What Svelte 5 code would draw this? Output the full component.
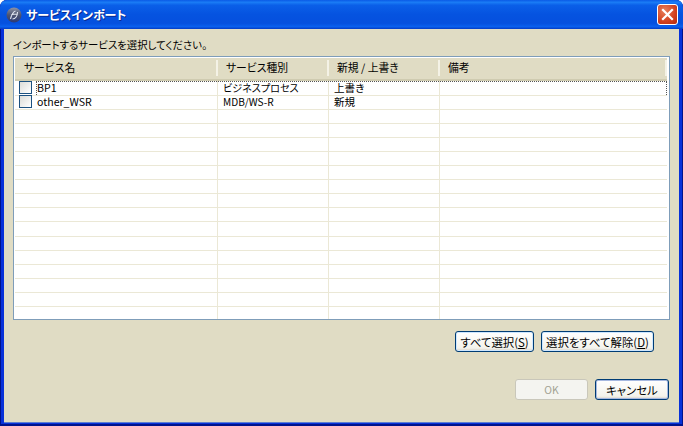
<script lang="ts">
	interface Row {
		name: string;
		kind: string;
		mode: string;
		note: string;
	}

	const services: Row[] = [
		{ name: 'BP1', kind: 'ビジネスプロセス', mode: '上書き', note: '' },
		{ name: 'other_WSR', kind: 'MDB/WS-R', mode: '新規', note: '' }
	];
	const emptyRows = Array.from({ length: 15 });
</script>

<div class="window">
	<header class="titlebar">
		<svg class="app-icon" width="16" height="16" viewBox="0 0 16 16">
			<defs>
				<linearGradient id="orb" x1="0" y1="0" x2="0" y2="1">
					<stop offset="0" stop-color="#8d93a6" />
					<stop offset="0.5" stop-color="#4d5470" />
					<stop offset="1" stop-color="#2b3a78" />
				</linearGradient>
			</defs>
			<circle cx="8" cy="8" r="7.5" fill="url(#orb)" />
			<path d="M4.5 12c1-4 2-7 5-8M6.5 12c3 0 5-3 5-7M5 8c2-1 4-1 6-1" fill="none" stroke="#dfe3ee" stroke-width="1.1" />
		</svg>
		<span class="title">サービスインポート</span>
		<button class="close" aria-label="閉じる">
			<svg width="13" height="13" viewBox="0 0 13 13">
				<path d="M2 2l9 9M11 2l-9 9" stroke="#fff" stroke-width="2.2" stroke-linecap="square" />
			</svg>
		</button>
	</header>

	<main class="content">
		<p class="prompt">インポートするサービスを選択してください。</p>

		<div class="table">
			<div class="thead">
				<div class="th c1">サービス名</div>
				<div class="th c2">サービス種別</div>
				<div class="th c3">新規 / 上書き</div>
				<div class="th c4">備考</div>
			</div>
			{#each services as row, i}
				<div class="row" class:focused={i === 0}>
					<div class="td c1">
						<span class="check"></span>
						<span class="name">{row.name}</span>
					</div>
					<div class="td c2">{row.kind}</div>
					<div class="td c3">{row.mode}</div>
					<div class="td c4">{row.note}</div>
				</div>
			{/each}
			{#each emptyRows as _}
				<div class="row">
					<div class="td c1"></div>
					<div class="td c2"></div>
					<div class="td c3"></div>
					<div class="td c4"></div>
				</div>
			{/each}
		</div>

		<div class="actions">
			<button class="btn">すべて選択(<u>S</u>)</button>
			<button class="btn wide">選択をすべて解除(<u>D</u>)</button>
		</div>

		<div class="footer">
			<button class="btn ok" disabled>OK</button>
			<button class="btn cancel">キャンセル</button>
		</div>
	</main>
</div>

<style>
	:global(body) {
		margin: 0;
		background: #fff;
	}

	.window {
		width: 683px;
		height: 426px;
		box-sizing: border-box;
		display: flex;
		flex-direction: column;
		border-radius: 7px 7px 0 0;
		overflow: hidden;
		background: #0831d9;
		box-shadow: inset 1px 0 0 #00138c, inset -1px 0 0 #00138c, inset 0 -2px 0 #00138c;
		font-family: "Noto Sans CJK JP", "Liberation Sans", sans-serif;
		font-size: 10.4px;
		font-feature-settings: "palt";
		color: #000;
	}

	.titlebar {
		height: 29px;
		flex: none;
		display: flex;
		align-items: center;
		padding: 0 5px 0 6px;
		gap: 4px;
		background: linear-gradient(180deg, #0a5ae6 0%, #1a7cf5 8%, #0a5fe8 18%, #0553e0 50%, #0550de 80%, #0a60ee 92%, #033bc4 100%);
	}

	.title {
		flex: 1;
		color: #fff;
		font-size: 12px;
		font-weight: 700;
		text-shadow: 1px 1px 0 #0a2a90;
	}

	.close {
		width: 21px;
		height: 21px;
		padding: 0;
		display: flex;
		align-items: center;
		justify-content: center;
		border: 1px solid #fff;
		border-radius: 3px;
		background: radial-gradient(circle at 35% 30%, #e8805c, #d2401e 60%, #b42a10);
	}

	.content {
		flex: 1;
		margin: 0 4px 4px 4px;
		padding: 0 9px;
		background: #e0dcc4;
		box-shadow: 0 1px 0 #5f7fd0;
		display: flex;
		flex-direction: column;
	}

	.prompt {
		margin: 0;
		height: 27px;
		line-height: 32px;
	}

	.table {
		height: 264px;
		box-sizing: border-box;
		border: 1px solid #7f9db9;
		padding: 1px 2px 0 1px;
		background: #fff;
		flex: none;
		overflow: hidden;
	}

	.thead {
		height: 21px;
		display: flex;
		background: #e0dcc4;
		border-bottom: 2px solid #cfcbb0;
	}

	.th {
		box-sizing: border-box;
		padding-left: 9px;
		border-right: 2px solid #f4f2e6;
		margin: 2px 0 3px;
		line-height: 15px;
		font-size: 10.8px;
	}

	.c1 {
		width: 203px;
	}

	.c2,
	.c3 {
		width: 111px;
	}

	.c4 {
		flex: 1;
	}

	.th.c2,
	.th.c3,
	.th.c4 {
		padding-left: 8px;
	}

	.row {
		position: relative;
		display: flex;
		height: 14.1px;
		box-sizing: border-box;
		border-bottom: 1px solid #ebe8d6;
	}

	.row.focused {
		height: 14.6px;
	}

	/* focus rectangle of the selected row, drawn over its cells */
	.row.focused::after {
		content: '';
		position: absolute;
		left: 21px;
		right: 0;
		top: 0;
		bottom: 0;
		border: 1px dotted #555;
		border-bottom: 0;
	}

	.td {
		box-sizing: border-box;
		padding-left: 5px;
		line-height: 13px;
		font-size: 10.6px;
		border-right: 1px solid #ebe8d6;
		white-space: nowrap;
		display: flex;
		align-items: center;
		gap: 5px;
	}

	.td.c1 {
		padding-left: 4px;
	}

	.td.c2 {
		font-size: 10.1px;
	}

	.td.c4 {
		border-right: 0;
	}

	.check {
		width: 11px;
		height: 11px;
		flex: none;
		border: 1px solid #1c5180;
		background: linear-gradient(135deg, #dcdcd7, #ffffff);
	}

	.row:nth-child(3) .td {
		padding-bottom: 1px;
	}

	.actions {
		display: flex;
		justify-content: flex-end;
		gap: 7px;
		margin: 11px 16px 0 0;
	}

	.footer {
		display: flex;
		justify-content: flex-end;
		gap: 7px;
		margin: 27px 1px 0 0;
	}

	.btn {
		height: 21px;
		padding: 0;
		font: inherit;
		font-size: 11.4px;
		font-feature-settings: "palt";
		color: #000;
		border: 1px solid #003c74;
		border-radius: 3px;
		background: linear-gradient(180deg, #fff, #f4f3ec 85%, #d6d0c5);
		box-shadow: inset 0 0 0 1px #cee7ff;
		width: 79px;
		white-space: nowrap;
	}

	.btn.wide {
		width: 113px;
	}

	.btn.ok {
		width: 73px;
		font-size: 10.4px;
		color: #a1a192;
		background: #f4f4f0;
		border-color: #c9c7ba;
		box-shadow: none;
	}

	.btn.cancel {
		width: 74px;
		box-shadow: inset 0 0 0 1px #a6b8e0;
	}
</style>
